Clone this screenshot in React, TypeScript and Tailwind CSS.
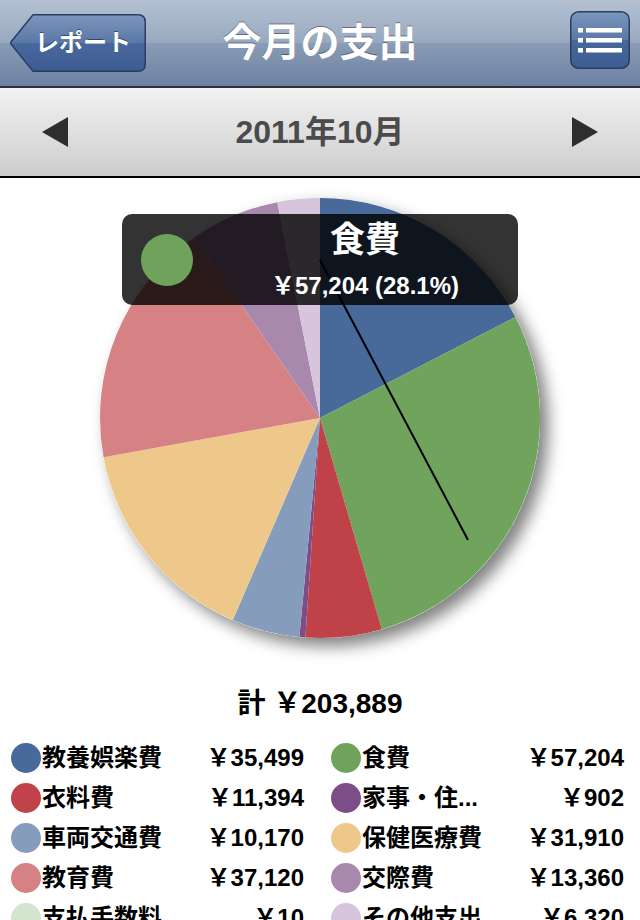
const data = [
  { name: "教養娯楽費", value: 35499, color: "#476a9a" },
  { name: "食費", value: 57204, color: "#6fa35b" },
  { name: "衣料費", value: 11394, color: "#c0434a" },
  { name: "家事・住...", value: 902, color: "#7d4d88" },
  { name: "車両交通費", value: 10170, color: "#869cbc" },
  { name: "保健医療費", value: 31910, color: "#eec88b" },
  { name: "教育費", value: 37120, color: "#d68284" },
  { name: "交際費", value: 13360, color: "#a889ad" },
  { name: "支払手数料", value: 10, color: "#d3e4cf" },
  { name: "その他支出", value: 6320, color: "#d7c5dd" },
];

const total = data.reduce((s, d) => s + d.value, 0);
const yen = (n: number) => "￥" + n.toLocaleString("en-US");

const CX = 320;
const CY = 240;
const R = 220;

function slicePath(start: number, end: number) {
  const a0 = (start / total) * Math.PI * 2;
  const a1 = (end / total) * Math.PI * 2;
  const x0 = CX + R * Math.sin(a0);
  const y0 = CY - R * Math.cos(a0);
  const x1 = CX + R * Math.sin(a1);
  const y1 = CY - R * Math.cos(a1);
  const large = a1 - a0 > Math.PI ? 1 : 0;
  return `M${CX},${CY} L${x0},${y0} A${R},${R} 0 ${large} 1 ${x1},${y1} Z`;
}

function BarGradient({ id }: { id: string }) {
  return (
    <linearGradient id={id} x1="0" y1="0" x2="0" y2="1">
      <stop offset="0" stopColor="#7c96bd" />
      <stop offset="0.5" stopColor="#5a77a6" />
      <stop offset="0.5" stopColor="#48689d" />
      <stop offset="1" stopColor="#3c5c93" />
    </linearGradient>
  );
}

function BackButton() {
  return (
    <button className="relative flex h-[58px] w-[136px] items-center justify-center pl-[10px]">
      <svg className="absolute inset-0" width="136" height="58" viewBox="0 0 136 58">
        <defs>
          <BarGradient id="backg" />
        </defs>
        <path
          d="M23,0.75 H128 Q135.25,0.75 135.25,8 V50 Q135.25,57.25 128,57.25 H23 L1,30 Q0.4,29 1,28 Z"
          fill="url(#backg)"
          stroke="#2b3e62"
          strokeWidth="1.5"
        />
      </svg>
      <span className="relative text-[24px] font-bold text-white [text-shadow:0_-1px_0_rgba(0,0,0,0.45)]">
        レポート
      </span>
    </button>
  );
}

function MenuButton() {
  return (
    <button className="relative h-[58px] w-[60px]">
      <svg className="absolute inset-0" width="60" height="58" viewBox="0 0 60 58">
        <defs>
          <BarGradient id="menug" />
        </defs>
        <rect x="0.75" y="0.75" width="58.5" height="56.5" rx="8" fill="url(#menug)" stroke="#2b3e62" strokeWidth="1.5" />
        {[17, 27, 37].map((y) => (
          <g key={y} fill="#fff">
            <rect x="8" y={y} width="5" height="4.5" />
            <rect x="16" y={y} width="36" height="4.5" />
          </g>
        ))}
      </svg>
    </button>
  );
}

function Triangle({ dir }: { dir: "left" | "right" }) {
  return (
    <svg width="26" height="30" viewBox="0 0 26 30">
      <polygon points={dir === "left" ? "26,0 26,30 0,15" : "0,0 0,30 26,15"} fill="#2e2e2e" />
    </svg>
  );
}

function Pie() {
  let acc = 0;
  return (
    <div className="relative h-[500px]">
      <svg width="640" height="500" viewBox="0 0 640 500" className="block">
        <defs>
          <filter id="pieShadow" x="-20%" y="-20%" width="140%" height="140%">
            <feDropShadow dx="8" dy="8" stdDeviation="8" floodColor="#000" floodOpacity="0.5" />
          </filter>
        </defs>
        <g filter="url(#pieShadow)">
          <circle cx={CX} cy={CY} r={R} fill="#fff" />
          {data.map((d) => {
            const start = acc;
            acc += d.value;
            return <path key={d.name} d={slicePath(start, acc)} fill={d.color} />;
          })}
        </g>
        <line x1="320" y1="82" x2="468" y2="362" stroke="#000" strokeWidth="2" />
      </svg>
      <div className="absolute left-[122px] top-[36px] flex h-[91px] w-[396px] items-center rounded-[10px] bg-black/80">
        <div className="ml-[19px] h-[52px] w-[52px] shrink-0 rounded-full bg-[#6fa35b]" />
        <div className="ml-[19px] flex flex-1 flex-col items-center text-white">
          <span className="text-[35px] font-bold leading-[42px]">食費</span>
          <span className="mt-[10px] text-[24px] font-bold leading-[30px]">￥57,204 (28.1%)</span>
        </div>
      </div>
    </div>
  );
}

export default function App() {
  return (
    <div className="w-[640px] overflow-hidden bg-white font-['Liberation_Sans','Noto_Sans_CJK_JP',sans-serif]">
      <header className="grid h-[88px] grid-cols-[1fr_auto_1fr] items-center border-b-2 border-[#2c3038] bg-[linear-gradient(to_bottom,#b5c1d2_0%,#97a8bf_50%,#8a9cb5_50%,#6c82a2_100%)] px-[10px]">
        <div className="justify-self-start">
          <BackButton />
        </div>
        <h1 className="text-[39px] font-bold text-white [text-shadow:0_-1px_0_rgba(0,0,0,0.4)]">今月の支出</h1>
        <div className="justify-self-end">
          <MenuButton />
        </div>
      </header>

      <div className="flex h-[90px] items-center justify-between border-b-2 border-black bg-[linear-gradient(to_bottom,#f2f2f2,#cdcdcd)] px-[42px]">
        <Triangle dir="left" />
        <span className="text-[32px] font-bold text-[#4b4b4b]">2011年10月</span>
        <Triangle dir="right" />
      </div>

      <Pie />

      <div className="flex h-[52px] items-center justify-center text-[28px] font-bold text-black">
        計 {yen(total)}
      </div>

      <div className="grid grid-cols-2 pt-2">
        {data.map((d) => (
          <div key={d.name} className="flex h-10 items-center pl-[11px] pr-4">
            <div className="h-[30px] w-[30px] shrink-0 rounded-full" style={{ backgroundColor: d.color }} />
            <span className="ml-[1px] flex-1 text-[24px] font-bold text-black">{d.name}</span>
            <span className="text-[24px] font-bold text-black">{yen(d.value)}</span>
          </div>
        ))}
      </div>
    </div>
  );
}
